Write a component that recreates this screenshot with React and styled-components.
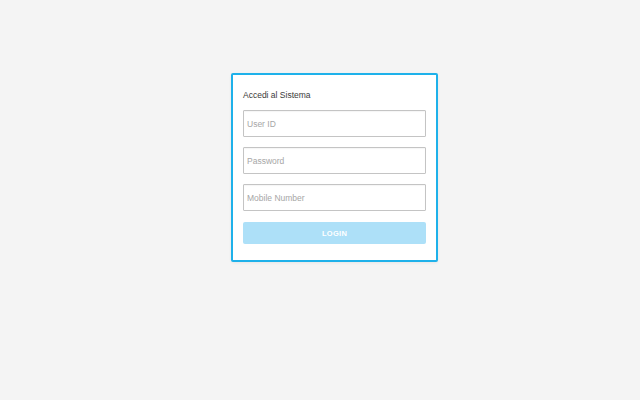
import React from "react";
import styled, { createGlobalStyle } from "styled-components";

const GlobalStyle = createGlobalStyle`
  html, body {
    margin: 0;
    padding: 0;
    background: #f4f4f4;
    font-family: "Liberation Sans", Arial, sans-serif;
  }
`;

export default function App() {
  return (
    <Page>
      <GlobalStyle />
      <Card>
        <Title>Accedi al Sistema</Title>
        <Form onSubmit={(e) => e.preventDefault()}>
          <Field type="text" placeholder="User ID" />
          <Field type="password" placeholder="Password" />
          <Field type="text" placeholder="Mobile Number" />
          <LoginButton type="submit">LOGIN</LoginButton>
        </Form>
      </Card>
    </Page>
  );
}

const Page = styled.div`
  width: 640px;
  height: 400px;
  background: #f4f4f4;
  padding: 73px 0 0 231px;
  box-sizing: border-box;
`;
const Card = styled.div`
  width: 207px;
  box-sizing: border-box;
  background: #fff;
  border: 2px solid #1eb1ea;
  border-radius: 2px;
  padding: 14px 10px 16px;
  box-shadow: 0 1px 3px rgba(0, 0, 0, 0.06);
`;
const Title = styled.div`
  font-size: 8.5px;
  line-height: 12px;
  color: #3a3a3a;
  margin-bottom: 9px;
`;
const Form = styled.form`
  display: flex;
  flex-direction: column;
  gap: 10px;
`;
const Field = styled.input`
  height: 27px;
  box-sizing: border-box;
  border: 1px solid #c4c4c4;
  border-radius: 1px;
  padding: 0 3px;
  font-family: "Liberation Sans", Arial, sans-serif;
  font-size: 8.5px;
  color: #555;
  background: #fff;
  box-shadow: inset 0 1px 1px rgba(0, 0, 0, 0.04);
  outline: none;
  &::placeholder {
    color: #a6a6a6;
  }
`;
const LoginButton = styled.button`
  height: 22px;
  margin-top: 1px;
  border: none;
  border-radius: 2px;
  background: #ade0f8;
  color: #fff;
  font-family: "Liberation Sans", Arial, sans-serif;
  font-size: 7.5px;
  font-weight: bold;
  letter-spacing: 0.3px;
  cursor: pointer;
`;
